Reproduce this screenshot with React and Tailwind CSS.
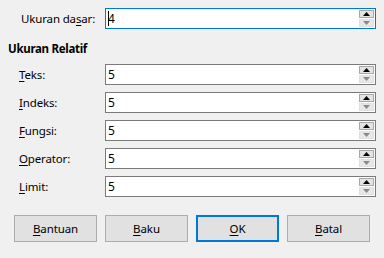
const font = { fontFamily: '"Noto Sans", "Open Sans", sans-serif' };

const Mn = ({ text, at }) => (
  <>
    {text.slice(0, at)}
    <span className="underline underline-offset-2 decoration-1">{text[at]}</span>
    {text.slice(at + 1)}
  </>
);

const Up = ({ color }) => (
  <svg width="7" height="4" viewBox="0 0 7 4">
    <path d="M3.5 0 L7 4 L0 4 Z" fill={color} />
  </svg>
);

const Down = ({ color }) => (
  <svg width="7" height="4" viewBox="0 0 7 4">
    <path d="M0 0 L7 0 L3.5 4 Z" fill={color} />
  </svg>
);

function Spin({ value, focused, caret }) {
  return (
    <div
      className={`flex h-[21px] w-[271px] bg-white border ${
        focused ? "border-[#0078d7]" : "border-[#7a7a7a]"
      }`}
    >
      <div className="flex-1 flex items-center pl-[2px] text-[12px] text-black leading-none">
        {caret && <span className="inline-block w-px h-[15px] bg-black -mr-px" />}
        <span>{value}</span>
      </div>
      <div className="flex flex-col w-[15px] mr-px py-px gap-px">
        <div className="h-[9px] flex items-center justify-center bg-[#e3e3e3] border border-[#a8a8a8]">
          <Up color="#000" />
        </div>
        <div className="h-[8px] flex items-center justify-center bg-[#e8e8e8] border border-[#e0e0e0]">
          <Down color="#8a8a8a" />
        </div>
      </div>
    </div>
  );
}

function Row({ label, at, value, focused, caret, pad = "pl-[19px]" }) {
  return (
    <div className="flex items-center h-[21px]">
      <div className={`w-[105px] ${pad} text-[11.5px] tracking-[-0.15px] text-black`}>
        <Mn text={label} at={at} />
      </div>
      <Spin value={value} focused={focused} caret={caret} />
    </div>
  );
}

function Btn({ label, at, primary }) {
  return (
    <button
      className={`w-[83px] h-[27px] bg-[#e1e1e1] text-[11.5px] tracking-[-0.1px] text-black flex items-center justify-center ${
        primary ? "border-2 border-[#0078d7]" : "border border-[#adadad]"
      }`}
    >
      <Mn text={label} at={at} />
    </button>
  );
}

const rows = [
  { label: "Teks:", at: 0 },
  { label: "Indeks:", at: 0 },
  { label: "Fungsi:", at: 0 },
  { label: "Operator:", at: 0 },
  { label: "Limit:", at: 0 },
];

export default function App() {
  return (
    <div className="w-[384px] h-[258px] bg-[#f0f0f0] pt-[8px] flex flex-col" style={font}>
      <Row label="Ukuran dasar:" at={9} value="4" focused caret pad="pl-[21px]" />
      <div className="mt-[12px] h-[16px] pl-[8px] flex items-center text-[11.5px] tracking-[-0.3px] font-bold text-black">
        Ukuran Relatif
      </div>
      <div className="mt-[7px] flex flex-col gap-[7px]">
        {rows.map((r) => (
          <Row key={r.label} label={r.label} at={r.at} value="5" />
        ))}
      </div>
      <div className="mt-[18px] pl-[14px] flex gap-[8px]">
        <Btn label="Bantuan" at={0} />
        <Btn label="Baku" at={0} />
        <Btn label="OK" at={0} primary />
        <Btn label="Batal" at={0} />
      </div>
    </div>
  );
}
